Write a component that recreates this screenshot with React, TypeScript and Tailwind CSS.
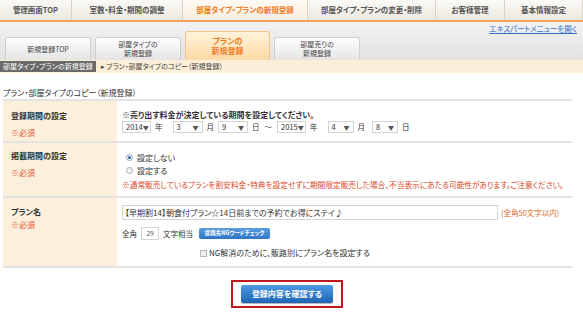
import React from 'react'

const navItems = [
  { label: '管理画面TOP', w: 'w-[72px]' },
  { label: '室数・料金・期間の調整', w: 'w-[111px]' },
  { label: '部屋タイプ・プランの新規登録', w: 'w-[125px]', active: true },
  { label: '部屋タイプ・プランの変更・削除', w: 'w-[128px]' },
  { label: 'お客様管理', w: 'w-[69px]' },
  { label: '基本情報設定', w: 'w-[78px]' },
]

function Select({ value, w }: { value: string; w: string }) {
  return (
    <div className={`flex h-[12px] items-center justify-between border border-[#d4d4d4] bg-white pl-[3px] pr-[3px] ${w}`}>
      <span>{value}</span>
      <span className="text-[6px] text-[#555]">▼</span>
    </div>
  )
}

function Tab({ top, bottom, active }: { top: string; bottom?: string; active?: boolean }) {
  if (active) {
    return (
      <div className="flex h-[29px] w-[85px] flex-col items-center justify-center rounded-t-[3px] border border-b-0 border-[#f2c58a] bg-gradient-to-b from-[#fff3dc] to-[#fdd9a4] text-[8px] font-bold leading-[10px] text-[#f07a1e]">
        <span>{top}</span>
        {bottom && <span>{bottom}</span>}
      </div>
    )
  }
  return (
    <div className="flex h-[23px] w-[86px] flex-col items-center justify-center rounded-t-[3px] border border-b-0 border-[#cfcfcf] bg-gradient-to-b from-white to-[#e4e4e4] text-[7px] leading-[9px] text-[#444]">
      <span>{top}</span>
      {bottom && <span>{bottom}</span>}
    </div>
  )
}

export default function App() {
  return (
    <div
      className="h-[312px] w-[583px] overflow-hidden bg-white text-[8px] text-[#333] [font-family:'Noto_Sans_CJK_JP',sans-serif] [font-feature-settings:'palt']"
    >
      {/* global nav */}
      <div className="flex h-[20px] bg-gradient-to-b from-[#fbfaf7] to-[#ece8df]">
        {navItems.map((item) => (
          <div
            key={item.label}
            className={`flex items-center justify-center border-r border-[#d9d4c8] text-[7.5px] font-bold ${item.w} ${
              item.active ? 'bg-gradient-to-b from-[#fffaf3] to-[#f8eee0] text-[#f07a1e]' : 'text-[#555]'
            }`}
          >
            {item.label}
          </div>
        ))}
      </div>
      <div className="h-[2px] bg-[#f3a35d]" />

      {/* tab area */}
      <div className="flex h-[38px] flex-col bg-gradient-to-b from-[#f2f2f2] to-[#e2e2e2]">
        <div className="flex h-[9px] justify-end pr-[6px] pt-[2px]">
          <span className="text-[7.5px] leading-[9px] text-[#2f6fc4] underline">エキスパートメニューを開く</span>
        </div>
        <div className="mt-auto flex items-end gap-[4px] pl-[5px]">
          <Tab top="新規登録TOP" />
          <Tab top="部屋タイプの" bottom="新規登録" />
          <Tab top="プランの" bottom="新規登録" active />
          <Tab top="部屋売りの" bottom="新規登録" />
        </div>
      </div>

      {/* breadcrumb */}
      <div className="flex h-[13px] items-center bg-[#fcefd9] text-[7px]">
        <span className="flex h-[11px] items-center bg-[#6a6a6a] px-[3px] text-white">部屋タイプ・プランの新規登録</span>
        <span className="ml-[5px] text-[#444]">▸ プラン・部屋タイプのコピー（新規登録）</span>
      </div>

      {/* heading */}
      <div className="ml-[3px] mt-[15px] text-[8px] leading-[10px] text-[#333]">プラン・部屋タイプのコピー（新規登録）</div>

      {/* form table */}
      <div className="ml-[3px] mt-[1px] w-[569px] border-t-2 border-[#e3e3e3]">
        <div className="flex h-[42px] border-b-2 border-[#e3e3e3]">
          <div className="w-[114px] bg-[#fcf0dc] pl-[8px] pt-[8px] leading-[14px]">
            <div className="font-bold">登録期間の設定</div>
            <div className="mt-[3px] text-[#e4512d]">※必須</div>
          </div>
          <div className="flex-1 pl-[5px] pt-[8px]">
            <div className="font-bold leading-[11px]">※売り出す料金が決定している期間を設定してください。</div>
            <div className="mt-[1px] flex items-center gap-[4px] text-[7.5px]">
              <Select value="2014" w="w-[29px]" />
              <span className="mr-[6px]">年</span>
              <Select value="3" w="w-[30px]" />
              <span>月</span>
              <Select value="9" w="w-[30px]" />
              <span>日</span>
              <span className="mx-[1px]">～</span>
              <Select value="2015" w="w-[29px]" />
              <span className="mr-[6px]">年</span>
              <Select value="4" w="w-[26px]" />
              <span className="mr-[3px]">月</span>
              <Select value="8" w="w-[26px]" />
              <span>日</span>
            </div>
          </div>
        </div>

        <div className="flex h-[55px] border-b-2 border-[#e3e3e3]">
          <div className="w-[114px] bg-[#fcf0dc] pl-[8px] pt-[6px] leading-[14px]">
            <div className="font-bold">掲載期間の設定</div>
            <div className="mt-[3px] text-[#e4512d]">※必須</div>
          </div>
          <div className="flex-1 pl-[9px] pt-[8px] leading-[13px]">
            <div className="flex items-center gap-[4px]">
              <span className="flex h-[7px] w-[7px] items-center justify-center rounded-full border border-[#8aa0b8] bg-white">
                <span className="h-[3px] w-[3px] rounded-full bg-[#2f5f9a]" />
              </span>
              <span>設定しない</span>
            </div>
            <div className="flex items-center gap-[4px]">
              <span className="h-[7px] w-[7px] rounded-full border border-[#aaa] bg-[#f4f4f4]" />
              <span>設定する</span>
            </div>
            <div className="-ml-[4px] mt-[1px] whitespace-nowrap text-[7.7px] text-[#d9481f]">
              ※通常販売しているプランを割安料金・特典を設定せずに期間限定販売した場合、不当表示にあたる可能性があります。ご注意ください。
            </div>
          </div>
        </div>

        <div className="flex h-[70px] border-b-2 border-[#e3e3e3]">
          <div className="w-[114px] bg-[#fcf0dc] pl-[8px] pt-[8px] leading-[12px]">
            <div className="font-bold">プラン名</div>
            <div className="mt-[1px] text-[#e4512d]">※必須</div>
          </div>
          <div className="flex-1 pl-[5px] pt-[7px]">
            <div className="flex items-center">
              <div className="flex h-[15px] w-[376px] items-center border border-[#d4d4d4] pl-[2px]">
                【早期割14】朝食付プラン☆14日前までの予約でお得にステイ♪
              </div>
              <span className="ml-[3px] text-[7.5px] text-[#e06a2a]">(全角50文字以内)</span>
            </div>
            <div className="mt-[7px] flex items-center text-[7.5px]">
              <span>全角</span>
              <div className="ml-[4px] flex h-[13px] w-[18px] items-center justify-center border border-[#d4d4d4] text-[6.5px] text-[#555]">29</div>
              <span className="ml-[4px]">文字相当</span>
              <span className="ml-[6px] flex h-[11px] w-[71px] items-center justify-center rounded-[2px] bg-gradient-to-b from-[#5a9fe0] to-[#2f74c4] text-[5.5px] font-bold text-white">
                提携先NGワードチェック
              </span>
            </div>
            <div className="ml-[78px] mt-[7px] flex items-center gap-[2px]">
              <span className="h-[7px] w-[7px] border border-[#bbb] bg-[#f0f0f0]" />
              <span>NG解消のために、販路別にプラン名を設定する</span>
            </div>
          </div>
        </div>
      </div>

      {/* submit */}
      <div className="mt-[12px] flex justify-center pr-[9px]">
        <div className="flex h-[28px] w-[112px] items-center justify-center border-2 border-[#c0161c]">
          <div className="flex h-[18px] w-[92px] items-center justify-center rounded-[2px] bg-gradient-to-b from-[#4d9be3] to-[#1e64b4] text-[8px] font-bold text-white shadow-[0_1px_1px_rgba(0,0,0,0.3)]">
            登録内容を確認する
          </div>
        </div>
      </div>
    </div>
  )
}
